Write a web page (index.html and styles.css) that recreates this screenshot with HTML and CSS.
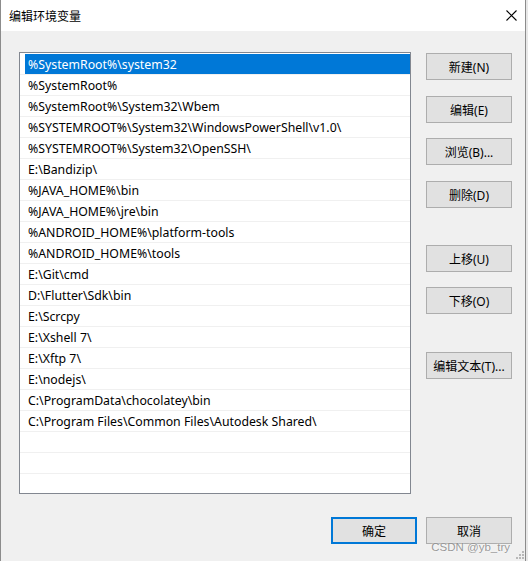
FILE: index.html
```html
<!DOCTYPE html>
<html lang="zh-CN">
<head>
<meta charset="utf-8">
<title>编辑环境变量</title>
<link rel="stylesheet" href="styles.css">
</head>
<body>
<div class="window">
  <div class="titlebar">
    <span class="title">编辑环境变量</span>
    <span class="close">
      <svg width="11" height="11" viewBox="0 0 11 11"><path d="M0.5 0.5 L10.5 10.5 M10.5 0.5 L0.5 10.5" stroke="#000" stroke-width="1.1" fill="none"/></svg>
    </span>
  </div>
  <div class="body">
    <div class="main">
      <div class="list">
        <div class="row selected"><span class="cell">%SystemRoot%\system32</span></div>
        <div class="row"><span class="cell">%SystemRoot%</span></div>
        <div class="row"><span class="cell">%SystemRoot%\System32\Wbem</span></div>
        <div class="row"><span class="cell">%SYSTEMROOT%\System32\WindowsPowerShell\v1.0\</span></div>
        <div class="row"><span class="cell">%SYSTEMROOT%\System32\OpenSSH\</span></div>
        <div class="row"><span class="cell">E:\Bandizip\</span></div>
        <div class="row"><span class="cell">%JAVA_HOME%\bin</span></div>
        <div class="row"><span class="cell">%JAVA_HOME%\jre\bin</span></div>
        <div class="row"><span class="cell">%ANDROID_HOME%\platform-tools</span></div>
        <div class="row"><span class="cell">%ANDROID_HOME%\tools</span></div>
        <div class="row"><span class="cell">E:\Git\cmd</span></div>
        <div class="row"><span class="cell">D:\Flutter\Sdk\bin</span></div>
        <div class="row"><span class="cell">E:\Scrcpy</span></div>
        <div class="row"><span class="cell">E:\Xshell 7\</span></div>
        <div class="row"><span class="cell">E:\Xftp 7\</span></div>
        <div class="row"><span class="cell">E:\nodejs\</span></div>
        <div class="row"><span class="cell">C:\ProgramData\chocolatey\bin</span></div>
        <div class="row"><span class="cell">C:\Program Files\Common Files\Autodesk Shared\</span></div>
        <div class="row"><span class="cell"></span></div>
        <div class="row"><span class="cell"></span></div>
        <div class="row"><span class="cell"></span></div>
      </div>
      <div class="side">
        <button class="btn first">新建(N)</button>
        <button class="btn gap16">编辑(E)</button>
        <button class="btn gap15">浏览(B)...</button>
        <button class="btn gap16">删除(D)</button>
        <button class="btn gap37">上移(U)</button>
        <button class="btn gap15">下移(O)</button>
        <button class="btn gap38">编辑文本(T)...</button>
      </div>
    </div>
    <div class="footer">
      <button class="btn default">确定</button>
      <button class="btn">取消</button>
    </div>
  </div>
  <div class="watermark">CSDN @yb_try</div>
  <div class="grip">
    <svg width="8" height="8" viewBox="0 0 8 8">
      <rect x="6" y="0" width="2" height="2" fill="#b8b8b8"/>
      <rect x="3" y="3" width="2" height="2" fill="#b8b8b8"/>
      <rect x="6" y="3" width="2" height="2" fill="#b8b8b8"/>
      <rect x="0" y="6" width="2" height="2" fill="#b8b8b8"/>
      <rect x="3" y="6" width="2" height="2" fill="#b8b8b8"/>
      <rect x="6" y="6" width="2" height="2" fill="#b8b8b8"/>
    </svg>
  </div>
</div>
</body>
</html>
```
FILE: styles.css
```css
* { box-sizing: border-box; }
html, body {
  margin: 0;
  padding: 0;
  background: #e8e8e8;
}
body {
  font-family: "Noto Sans", "Noto Sans CJK SC", sans-serif;
  font-size: 12px;
  color: #000;
  width: 528px;
  height: 561px;
  overflow: hidden;
}
.window {
  position: relative;
  width: 526px;
  height: 561px;
  border-left: 1px solid #8c8c8c;
  border-right: 1px solid #8c8c8c;
  background: #f0f0f0;
  display: flex;
  flex-direction: column;
}
.titlebar {
  height: 31px;
  background: #fff;
  display: flex;
  align-items: center;
  justify-content: space-between;
  padding: 0 8px 0 8px;
}
.title {
  font-family: "Noto Sans CJK SC", sans-serif;
  font-size: 12px;
  line-height: 1;
}
.close {
  display: flex;
  width: 11px;
  height: 11px;
}
.body {
  flex: 1;
  padding: 21px 0 0 18px;
  display: flex;
  flex-direction: column;
}
.main {
  display: flex;
  align-items: flex-start;
}
.list {
  width: 392px;
  height: 442px;
  border: 1px solid #828790;
  background: #fff;
  padding-top: 1px;
  overflow: hidden;
}
.row {
  height: 21px;
  border-bottom: 1px solid #f0f0f0;
  display: flex;
}
.cell {
  flex: 1;
  margin-left: 5px;
  padding-left: 3px;
  line-height: 21px;
  white-space: nowrap;
  font-size: 12.3px;
}
.selected .cell {
  background: #0078d7;
  color: #fff;
}
.side {
  display: flex;
  flex-direction: column;
  margin-left: 15px;
}
.btn {
  width: 86px;
  height: 27px;
  padding: 0;
  margin: 0;
  background: #e1e1e1;
  border: 1px solid #adadad;
  font-family: "Noto Sans", "Noto Sans CJK SC", sans-serif;
  font-size: 12px;
  color: #000;
}
.first { margin-top: 1px; }
.gap15 { margin-top: 15px; }
.gap16 { margin-top: 16px; }
.gap37 { margin-top: 37px; }
.gap38 { margin-top: 38px; }
.footer {
  display: flex;
  justify-content: flex-end;
  gap: 9px;
  margin-top: 23px;
  padding-right: 13px;
}
.default {
  border: 2px solid #0078d7;
}
.watermark {
  position: absolute;
  right: 15px;
  bottom: 8px;
  font-family: "Liberation Sans", sans-serif;
  font-size: 11.5px;
  color: rgba(120,120,120,0.75);
  text-shadow: 0 0 2px #fff;
}
.grip {
  position: absolute;
  right: 1px;
  bottom: 2px;
  display: flex;
}
```
